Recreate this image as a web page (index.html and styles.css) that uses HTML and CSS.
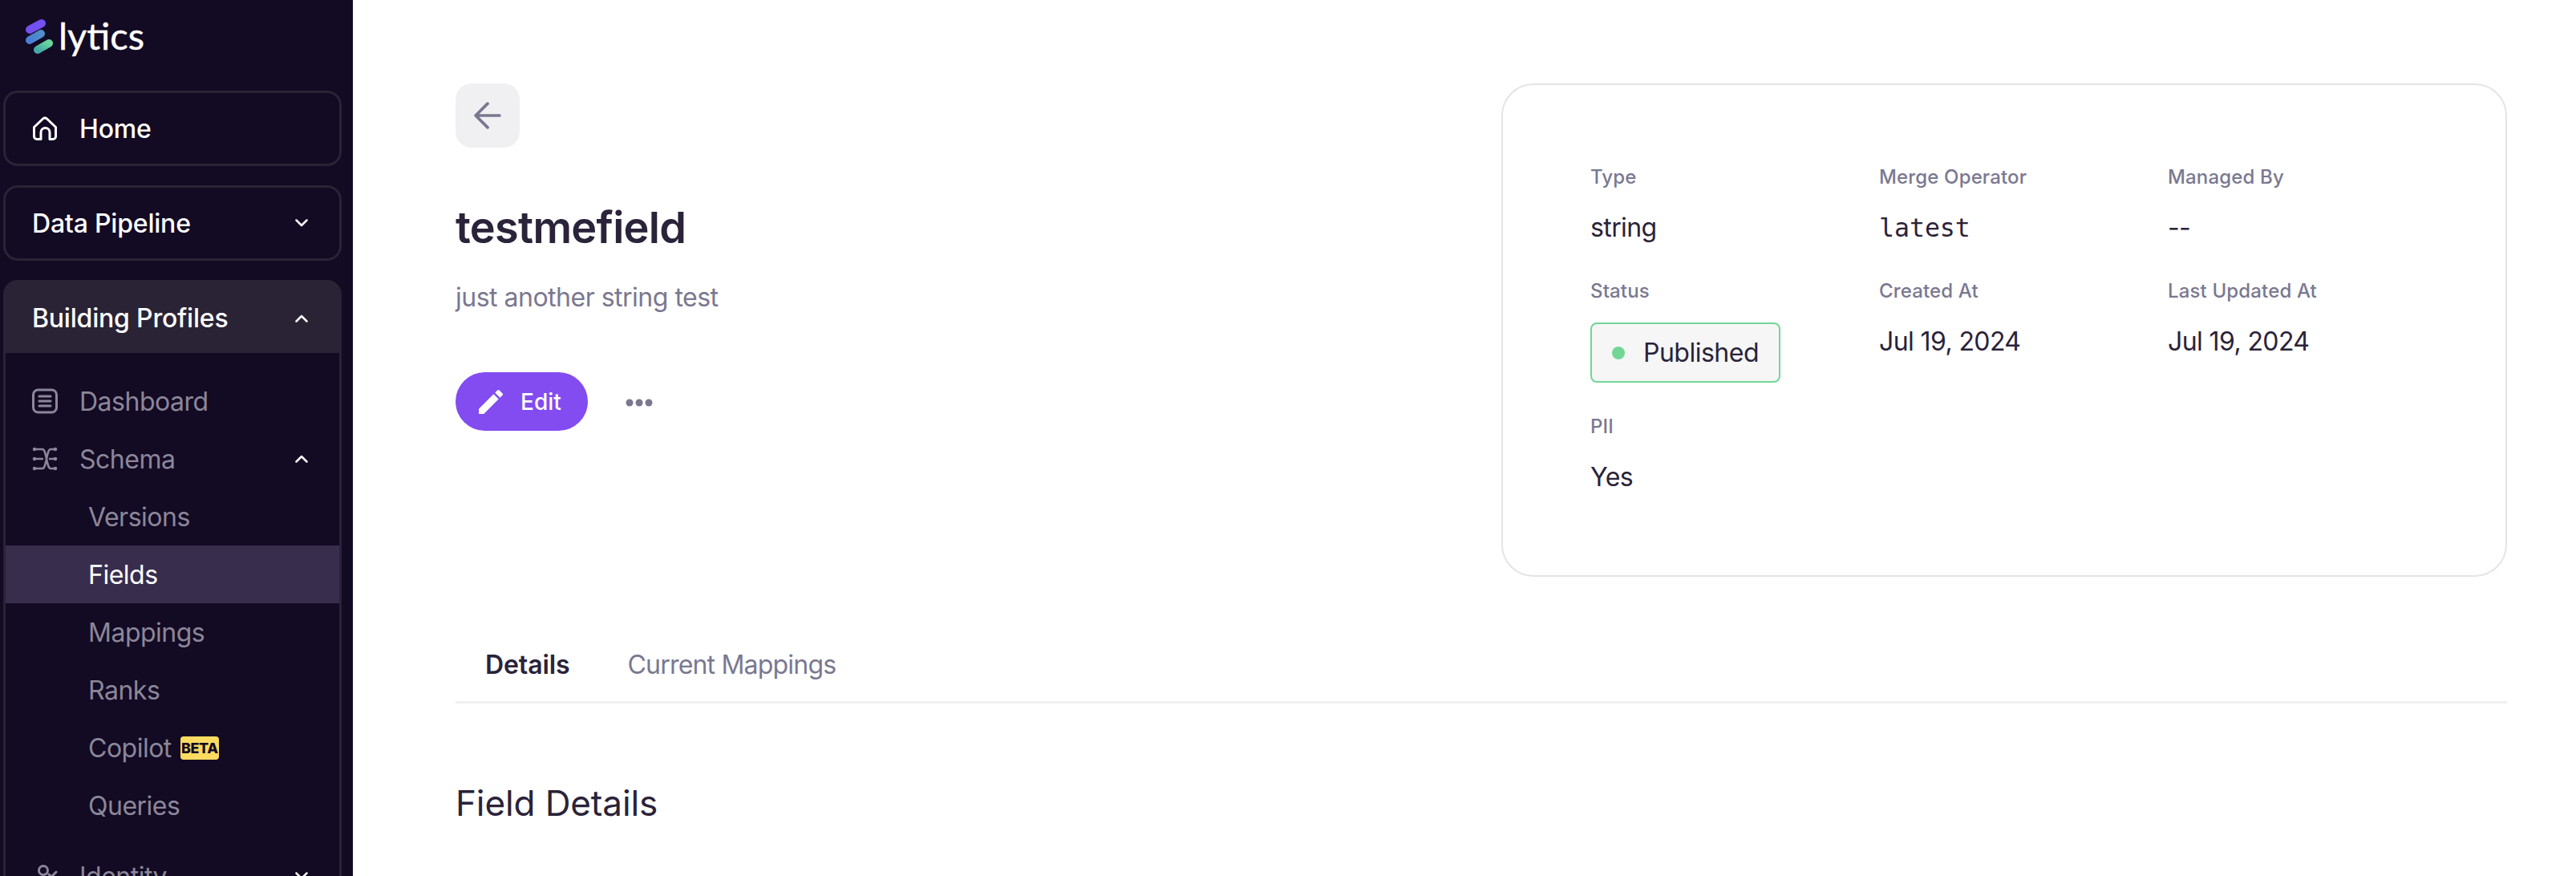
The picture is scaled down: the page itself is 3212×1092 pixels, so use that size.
FILE: index.html
```html
<!DOCTYPE html>
<html lang="en">
<head>
    <meta charset="UTF-8">
    <title>testmefield - Lytics</title>
    <link rel="stylesheet" href="styles.css">
</head>
<body>
    <div class="app">
        <!-- sidebar -->
        <aside class="sidebar">
            <div class="brand">
                <svg class="brand-mark" viewBox="0 0 36 48" width="36" height="48">
                    <defs>
                        <linearGradient id="bar2" x1="0" y1="0" x2="1" y2="0">
                            <stop offset="0" stop-color="#4a7fd6"/>
                            <stop offset="1" stop-color="#4f8fc8"/>
                        </linearGradient>
                        <linearGradient id="bar3" x1="0" y1="1" x2="1" y2="0">
                            <stop offset="0" stop-color="#45a9a6"/>
                            <stop offset="1" stop-color="#68d69c"/>
                        </linearGradient>
                    </defs>
                    <line x1="6" y1="14" x2="21" y2="6" stroke="#7350f0" stroke-width="10" stroke-linecap="round"/>
                    <line x1="6" y1="27" x2="20" y2="19" stroke="url(#bar2)" stroke-width="10" stroke-linecap="round"/>
                    <line x1="16" y1="39" x2="30" y2="31" stroke="url(#bar3)" stroke-width="10" stroke-linecap="round"/>
                </svg>
                <span class="brand-name">lytics</span>
            </div>

            <nav class="side-nav">
                <a class="nav-box" href="#home">
                    <svg class="nav-icon" viewBox="0 0 32 32" width="32" height="32" fill="none" stroke="#fff" stroke-width="3" stroke-linejoin="round" stroke-linecap="round">
                        <path d="M2.500 14.500 13.600 4a3.500 3.500 0 0 1 4.800 0l11.100 10.500V26a3.500 3.500 0 0 1-3.500 3.500h-4V21a5.500 5.500 0 0 0-11 0v8.500H6A3.500 3.500 0 0 1 2.500 26z"/>
                    </svg>
                    <span class="nav-box-label">Home</span>
                </a>

                <a class="nav-box" href="#pipeline">
                    <span class="nav-box-label">Data Pipeline</span>
                    <svg class="chevron" viewBox="0 0 16 10" width="16" height="10"><path d="M1.500 1.500 8 8l6.500-6.500"/></svg>
                </a>

                <div class="nav-group">
                    <div class="nav-group-head">
                        <span class="nav-box-label">Building Profiles</span>
                        <svg class="chevron" viewBox="0 0 16 10" width="16" height="10"><path d="M1.500 8.500 8 2l6.500 6.500"/></svg>
                    </div>
                    <div class="nav-group-body">
                        <a class="nav-row" href="#dashboard">
                            <svg class="nav-icon" viewBox="0 0 32 32" width="32" height="32" fill="none" stroke="#8b8799" stroke-width="3" stroke-linecap="round">
                                <rect x="1.500" y="2" width="29" height="28" rx="6"/>
                                <path d="M9 10h14M9 16h14M9 22h14"/>
                            </svg>
                            <span>Dashboard</span>
                        </a>
                        <a class="nav-row" href="#schema">
                            <svg class="nav-icon" viewBox="0 0 32 32" width="32" height="32" fill="#8b8799" stroke="#8b8799" stroke-width="2.500" stroke-linecap="round">
                                <path fill="none" d="M3 4h10c5 0 5 24 10 24h6M3 28h10c5 0 5-24 10-24h6M3 16h10M22 16h7"/>
                                <circle cx="3" cy="4" r="1"/><circle cx="3" cy="16" r="1"/><circle cx="3" cy="28" r="1"/>
                                <circle cx="29" cy="4" r="1"/><circle cx="29" cy="16" r="1"/><circle cx="29" cy="28" r="1"/>
                            </svg>
                            <span>Schema</span>
                            <svg class="chevron" viewBox="0 0 16 10" width="16" height="10"><path d="M1.500 8.500 8 2l6.500 6.500"/></svg>
                        </a>
                        <a class="nav-row sub" href="#versions"><span>Versions</span></a>
                        <a class="nav-row sub active" href="#fields"><span>Fields</span></a>
                        <a class="nav-row sub" href="#mappings"><span>Mappings</span></a>
                        <a class="nav-row sub" href="#ranks"><span>Ranks</span></a>
                        <a class="nav-row sub" href="#copilot"><span>Copilot</span><span class="beta">BETA</span></a>
                        <a class="nav-row sub" href="#queries"><span>Queries</span></a>
                        <a class="nav-row nav-row-next" href="#identity">
                            <svg class="nav-icon" viewBox="0 0 32 32" width="32" height="32" fill="none" stroke="#8b8799" stroke-width="3" stroke-linecap="round" stroke-linejoin="round">
                                <circle cx="14" cy="9" r="5.500"/>
                                <path d="M21 14l3 3 6-6M4 30c0-6 5-9 10-9s10 3 10 9"/>
                            </svg>
                            <span>Identity</span>
                            <svg class="chevron" viewBox="0 0 16 10" width="16" height="10"><path d="M1.500 1.500 8 8l6.500-6.500"/></svg>
                        </a>
                    </div>
                </div>
            </nav>
        </aside>

        <!-- main content -->
        <main class="content">
            <div class="top">
                <div class="intro">
                    <a class="back-btn" href="#back">
                        <svg viewBox="0 0 32 32" width="34" height="34" fill="none" stroke="#7a7890" stroke-width="3.500" stroke-linecap="round" stroke-linejoin="round">
                            <path d="M30 16H2M16 2 2 16l14 14"/>
                        </svg>
                    </a>
                    <h1 class="title">testmefield</h1>
                    <p class="subtitle">just another string test</p>
                    <div class="actions">
                        <a class="edit-btn" href="#edit">
                            <svg viewBox="0 0 24 24" width="40" height="40" fill="#fff">
                                <path d="M3 17.250V21h3.750L17.810 9.940l-3.750-3.750L3 17.250zM20.710 7.040a1 1 0 0 0 0-1.410l-2.340-2.340a1 1 0 0 0-1.410 0l-1.830 1.830 3.750 3.750 1.830-1.830z"/>
                            </svg>
                            <span>Edit</span>
                        </a>
                        <svg class="more" viewBox="0 0 34 12" width="34" height="12" fill="#7a7890">
                            <circle cx="5" cy="6" r="4.500"/><circle cx="17" cy="6" r="4.500"/><circle cx="29" cy="6" r="4.500"/>
                        </svg>
                    </div>
                </div>

                <section class="meta-card">
                    <div class="meta-item"><div class="meta-label">Type</div><div class="meta-value">string</div></div>
                    <div class="meta-item"><div class="meta-label">Merge Operator</div><div class="meta-value mono">latest</div></div>
                    <div class="meta-item"><div class="meta-label">Managed By</div><div class="meta-value">--</div></div>
                    <div class="meta-item">
                        <div class="meta-label">Status</div>
                        <div class="status"><span class="status-dot"></span>Published</div>
                    </div>
                    <div class="meta-item"><div class="meta-label">Created At</div><div class="meta-value">Jul 19, 2024</div></div>
                    <div class="meta-item"><div class="meta-label">Last Updated At</div><div class="meta-value">Jul 19, 2024</div></div>
                    <div class="meta-item"><div class="meta-label">PII</div><div class="meta-value">Yes</div></div>
                </section>
            </div>

            <div class="tabs">
                <a class="tab active" href="#details">Details</a>
                <a class="tab" href="#current-mappings">Current Mappings</a>
            </div>

            <h2 class="section-title">Field Details</h2>
        </main>
    </div>
</body>
</html>
```

FILE: styles.css
```css
* {
    margin: 0;
    padding: 0;
    box-sizing: border-box;
}

html, body {
    height: 100%;
    overflow: hidden;
}

body {
    font-family: Inter, "Liberation Sans", sans-serif;
    background-color: white;
    color: #2a2339;
}

a {
    text-decoration: none;
    color: inherit;
}

.app {
    display: flex;
    height: 1092px;
    overflow: hidden;
}

/* sidebar */
.sidebar {
    width: 440px;
    flex-shrink: 0;
    background-color: #130a24;
    color: white;
    overflow: hidden;
    padding: 0 14px 0 4px;
}

.brand {
    display: flex;
    align-items: flex-start;
    gap: 6px;
    height: 113px;
    padding: 23px 0 0 27px;
}

.brand-name {
    font-family: Lato, sans-serif;
    font-size: 47px;
    line-height: 42px;
    font-weight: 400;
    -webkit-text-stroke: 0.4px white;
}

.side-nav {
    display: flex;
    flex-direction: column;
    gap: 24px;
}

.nav-box {
    display: flex;
    align-items: center;
    height: 94px;
    padding: 0 39px 0 33px;
    border: 3px solid #2a2335;
    border-radius: 18px;
}

.nav-box .nav-icon {
    margin-right: 27px;
}

.nav-box-label {
    font-size: 32px;
    font-weight: 500;
    letter-spacing: -0.2px;
    flex: 1;
}

.chevron {
    flex-shrink: 0;
    fill: none;
    stroke: white;
    stroke-width: 2.500;
    stroke-linecap: round;
    stroke-linejoin: round;
}

.nav-group {
    border-radius: 18px 18px 0 0;
    overflow: hidden;
}

.nav-group-head {
    display: flex;
    align-items: center;
    height: 91px;
    padding: 4px 42px 0 36px;
    background-color: #2a2335;
}

.nav-group-body {
    border-left: 3px solid #2a2335;
    border-right: 3px solid #2a2335;
    padding-top: 24px;
}

.nav-row {
    display: flex;
    align-items: center;
    height: 72px;
    padding: 0 39px 0 33px;
    font-size: 32px;
    letter-spacing: -0.5px;
    color: #8b8799;
}

.nav-row .nav-icon {
    margin-right: 27px;
}

.nav-row .chevron {
    margin-left: auto;
}

.nav-row.sub {
    padding-left: 103px;
}

.nav-row.active {
    background-color: #392d4d;
    color: white;
}

.nav-row-next {
    margin-top: 16px;
}

.beta {
    display: flex;
    align-items: center;
    justify-content: center;
    width: 48px;
    height: 29px;
    margin-left: 11px;
    font-size: 18px;
    font-weight: 800;
    letter-spacing: -0.4px;
    background-color: #fbdc60;
    color: #130a24;
    border-radius: 4px;
}

/* main content */
.content {
    flex: 1;
    min-width: 0;
    padding: 104px 86px 0 128px;
}

.top {
    display: flex;
    justify-content: space-between;
    align-items: flex-start;
}

.back-btn {
    display: flex;
    align-items: center;
    justify-content: center;
    width: 80px;
    height: 80px;
    border-radius: 20px;
    background-color: #f0f0f2;
}

.title {
    margin-top: 68px;
    font-size: 54px;
    line-height: 64px;
    font-weight: 600;
    letter-spacing: -0.7px;
}

.subtitle {
    margin-top: 35px;
    font-size: 32px;
    line-height: 40px;
    letter-spacing: -0.5px;
    color: #7a7890;
}

.actions {
    display: flex;
    align-items: center;
    gap: 47px;
    margin-top: 73px;
}

.edit-btn {
    display: flex;
    align-items: center;
    gap: 17px;
    height: 73px;
    width: 165px;
    padding-left: 24px;
    border-radius: 37px;
    background-color: #824cf0;
    color: white;
    font-size: 28px;
    font-weight: 500;
}

.more {
    margin-top: 2px;
}

.meta-card {
    display: grid;
    grid-template-columns: repeat(3, 360px);
    row-gap: 39px;
    width: 1254px;
    padding: 99px 0 98px 109px;
    border: 2px solid #e4e4e8;
    border-radius: 40px;
}

.meta-label {
    font-size: 24px;
    line-height: 32px;
    font-weight: 500;
    letter-spacing: 0.15px;
    color: #7a7890;
    margin-bottom: 23px;
}

.meta-value {
    font-size: 32px;
    line-height: 48px;
    letter-spacing: -0.6px;
}

.mono {
    font-family: "DejaVu Sans Mono", monospace;
    font-size: 31.500px;
    letter-spacing: 0;
}

.status {
    display: inline-flex;
    align-items: center;
    height: 75px;
    padding: 0 25px;
    gap: 23px;
    font-size: 32px;
    letter-spacing: -0.5px;
    background-color: #f6f6f7;
    border: 2px solid #72d695;
    border-radius: 8px;
}

.status-dot {
    width: 16px;
    height: 16px;
    border-radius: 50%;
    background-color: #72d695;
}

.tabs {
    display: flex;
    height: 87px;
    margin-top: 71px;
    border-bottom: 3px solid #f0f0f2;
}

.tab {
    padding: 19px 35px 0 37px;
    font-size: 32px;
    line-height: 40px;
    letter-spacing: -0.8px;
    color: #7a7890;
}

.tab.active {
    color: #2a2339;
    font-weight: 600;
    letter-spacing: -0.1px;
}

.section-title {
    margin-top: 94px;
    font-size: 44px;
    line-height: 60px;
    font-weight: 400;
    letter-spacing: -0.1px;
}
```
